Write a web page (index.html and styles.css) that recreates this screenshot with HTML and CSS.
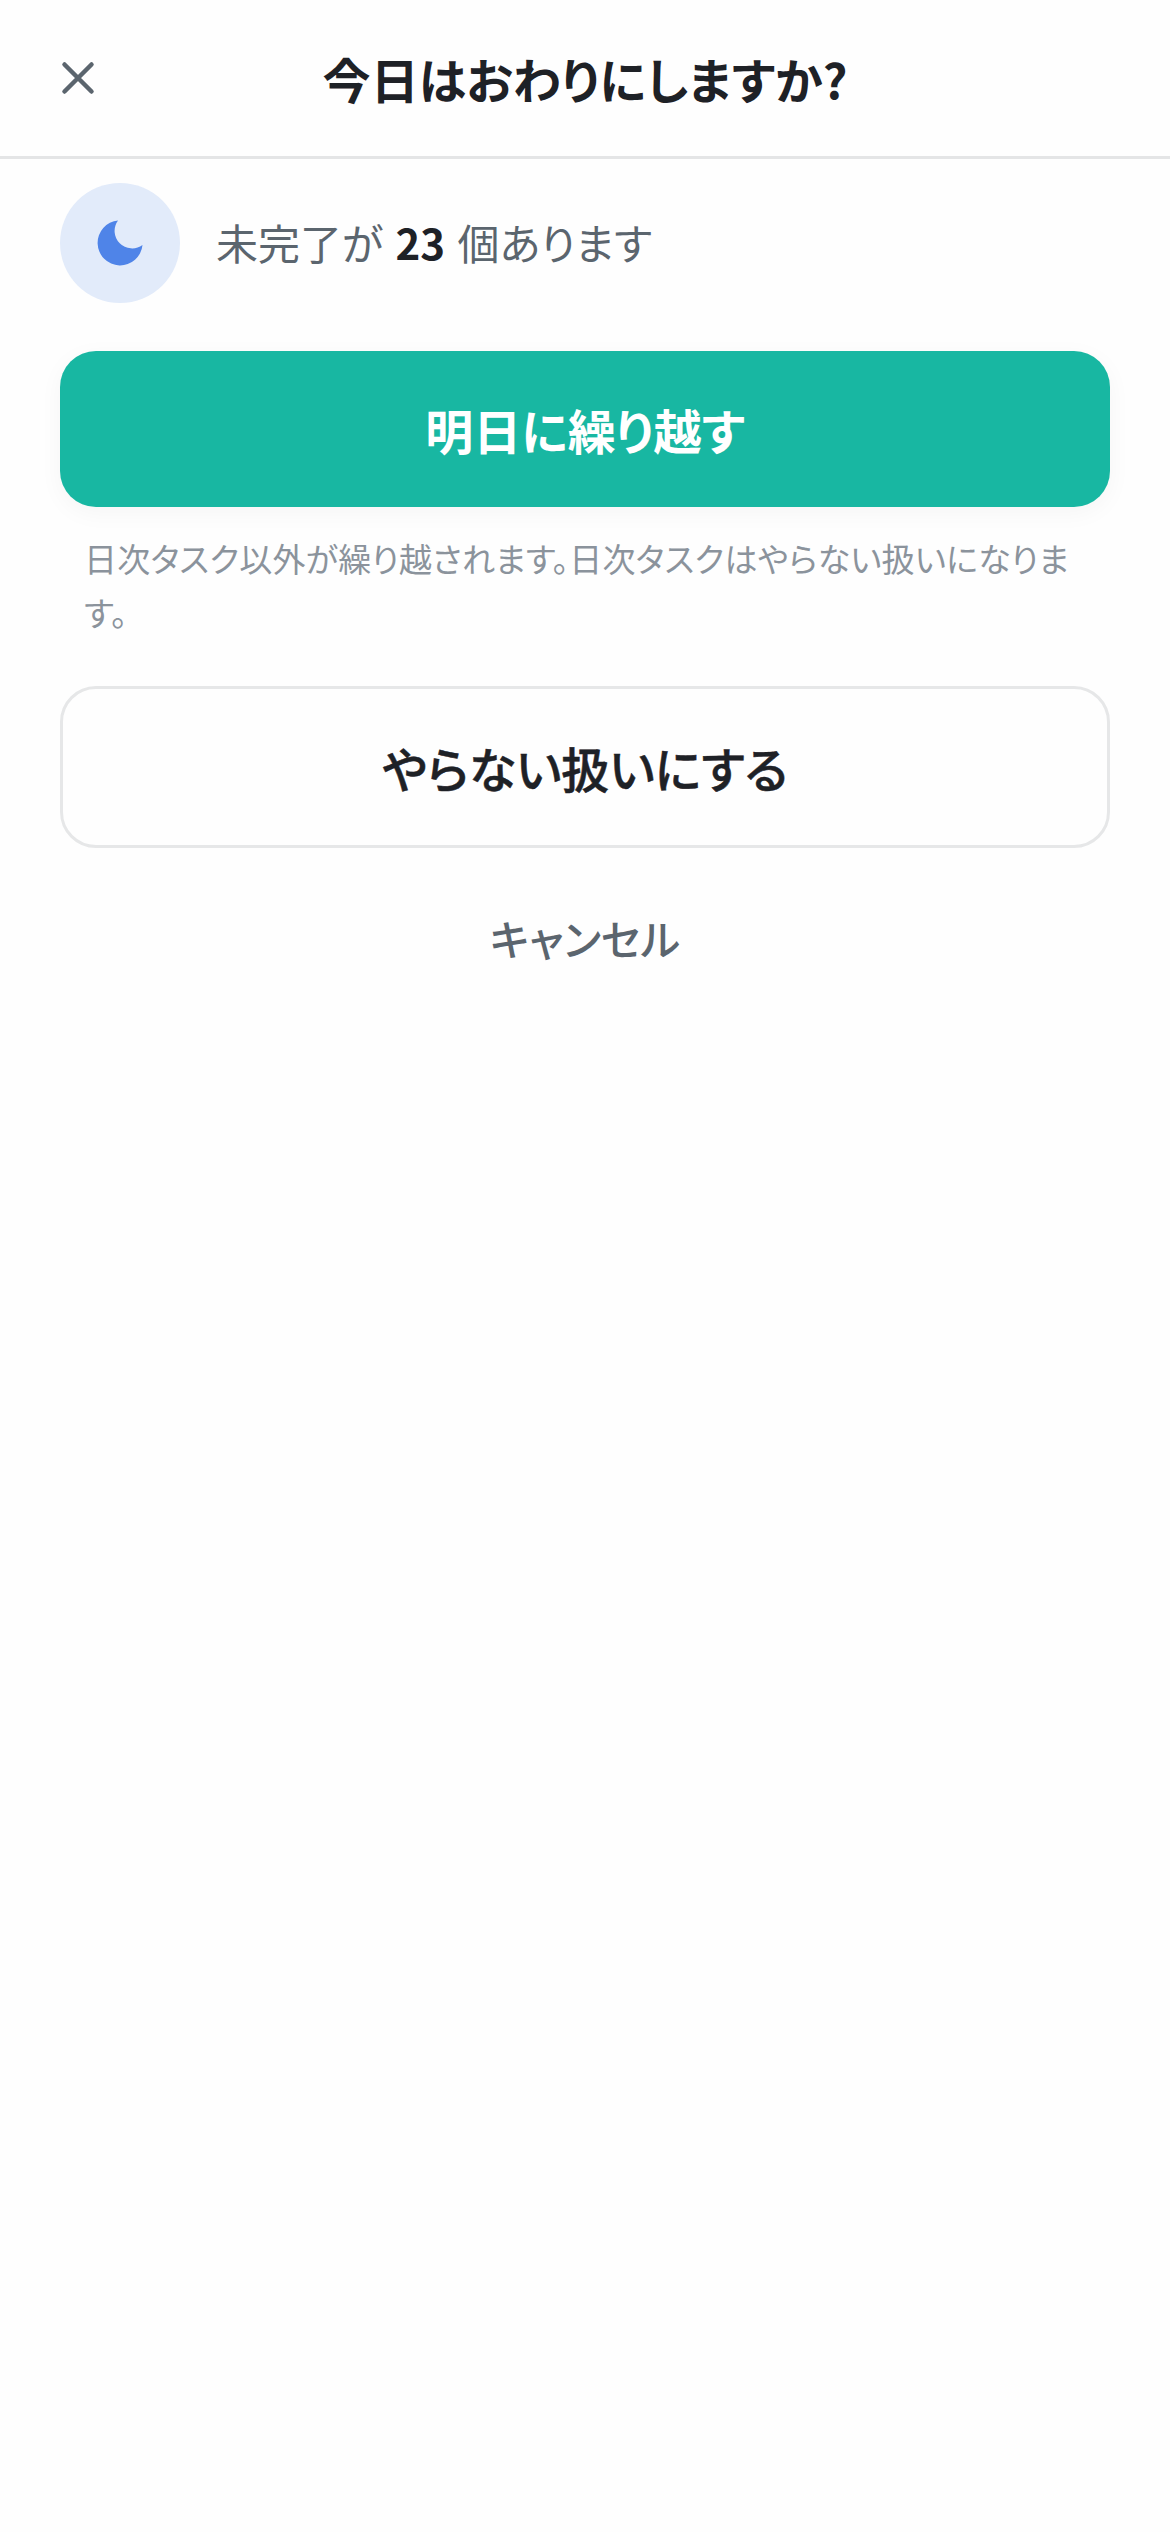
FILE: index.html
```html
<!DOCTYPE html>
<html lang="ja">
<head>
<meta charset="utf-8">
<title>今日はおわりにしますか?</title>
<link rel="stylesheet" href="styles.css">
</head>
<body>
<header class="header">
  <button class="close" aria-label="閉じる">
    <svg class="close-icon" viewBox="0 0 24 24" fill="none" stroke="currentColor" stroke-width="2" stroke-linecap="round"><path d="M18 6 6 18M6 6l12 12"/></svg>
  </button>
  <h1 class="title">今日はおわりにしますか?</h1>
</header>
<main class="content">
  <div class="summary">
    <div class="badge">
      <svg class="moon" viewBox="0 0 24 24" fill="currentColor"><path d="M21 12.79A9 9 0 1 1 11.21 3 7 7 0 0 0 21 12.79z"/></svg>
    </div>
    <p class="summary-text">未完了が <strong class="count">23</strong> 個あります</p>
  </div>
  <button class="button primary">明日に繰り越す</button>
  <p class="note">日次タスク以外が繰り越されます。日次タスクはやらない扱いになります。</p>
  <button class="button secondary">やらない扱いにする</button>
  <button class="cancel">キャンセル</button>
</main>
</body>
</html>
```
FILE: styles.css
```css
* {
  box-sizing: border-box;
  margin: 0;
}

body {
  min-height: 2532px;
  background: #fefefe;
  color: #1e2126;
  font-family: "Noto Sans CJK JP", sans-serif;
  font-feature-settings: "palt";
}

button {
  padding: 0;
  border: 0;
  background: none;
  color: inherit;
  font: inherit;
  font-feature-settings: inherit;
}

.header {
  display: grid;
  grid-template-columns: 132px 1fr 132px;
  align-items: center;
  height: 159px;
  padding: 0 12px;
  border-bottom: 3px solid #e4e5e6;
}

.close {
  display: flex;
  justify-content: center;
  color: #5b656e;
}

.close-icon {
  width: 54px;
  height: 54px;
}

.title {
  font-size: 48px;
  font-weight: 700;
  line-height: 72px;
  letter-spacing: 0.15px;
  text-align: center;
}

.content {
  display: flex;
  flex-direction: column;
  padding: 24px 60px;
}

.summary {
  display: flex;
  align-items: center;
  gap: 36px;
  margin-bottom: 48px;
}

.badge {
  display: flex;
  align-items: center;
  justify-content: center;
  width: 120px;
  height: 120px;
  border-radius: 50%;
  background: #e2ebfa;
  color: #4f84e8;
}

.moon {
  width: 60px;
  height: 60px;
}

.summary-text {
  padding-bottom: 3px;
  color: #5b656e;
  font-size: 42px;
  line-height: 63px;
  word-spacing: 3px;
}

.count {
  color: #1e2126;
  font-weight: 700;
}

.button {
  border-radius: 36px;
  font-size: 48px;
  font-weight: 700;
}

.primary {
  height: 156px;
  background: #18b7a2;
  box-shadow: 0 6px 24px rgba(0, 0, 0, 0.04);
  color: #fff;
}

.note {
  margin: 25px 0 47px;
  padding: 0 18px 0 24px;
  color: #8b939c;
  font-size: 33px;
  line-height: 53.5px;
  letter-spacing: 0.21px;
}

.secondary {
  height: 162px;
  border: 3px solid #e6e7e8;
  font-weight: 500;
  -webkit-text-stroke: 0.5px currentColor;
}

.cancel {
  height: 126px;
  margin-top: 26px;
  color: #5b656e;
  font-size: 42px;
  font-weight: 500;
}
```
